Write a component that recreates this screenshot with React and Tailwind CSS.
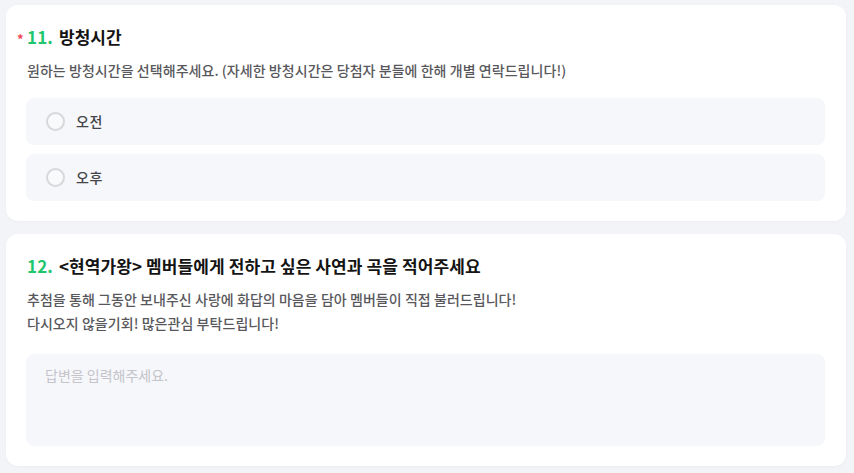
const font = { fontFamily: '"Noto Sans CJK KR", "Noto Sans", sans-serif' };

const options = ['오전', '오후'];

const Question = ({ num, title, required, children }) => (
    <div className="relative">
        {required && (
            <span className="absolute left-[-10px] top-[4px] text-[13px] font-bold text-[#f04452]">*</span>
        )}
        <h2 className="text-[17px] leading-[24px] font-bold text-[#141414] tracking-[0.1px]">
            <span className="text-[#1fc66b] mr-[6px]">{num}.</span>
            {title}
        </h2>
        {children}
    </div>
);

export default function App() {
    return (
        <div style={font} className="min-h-[473px] bg-[#f3f4f8] pt-[5px] pl-[6px] pr-[8px] pb-[7px] flex flex-col gap-[13px]">
            {/* Q11 */}
            <div className="bg-white rounded-[12px] px-[21px] pt-[20px] pb-[20px] shadow-[0_1px_3px_rgba(0,0,0,0.03)]">
                <Question num="11" title="방청시간" required>
                    <p className="mt-[10px] text-[14px] leading-[22px] font-medium text-[#58585c] tracking-[0.05px]">
                        원하는 방청시간을 선택해주세요. (자세한 방청시간은 당첨자 분들에 한해 개별 연락드립니다!)
                    </p>
                </Question>
                <div className="mt-[17px] ml-[-1px] flex flex-col gap-[9px]">
                    {options.map(opt => (
                        <label key={opt} className="h-[47px] rounded-[8px] bg-[#f6f7fb] flex items-center px-[20px] gap-[11px] cursor-pointer">
                            <span className="w-[19px] h-[19px] rounded-full border-2 border-[#d8d8dc] bg-white/40" />
                            <span className="text-[14px] font-medium text-[#444448] tracking-[0.5px]">{opt}</span>
                        </label>
                    ))}
                </div>
            </div>

            {/* Q12 */}
            <div className="bg-white rounded-[12px] px-[21px] pt-[20px] pb-[20px] shadow-[0_1px_3px_rgba(0,0,0,0.03)]">
                <Question num="12" title="<현역가왕> 멤버들에게 전하고 싶은 사연과 곡을 적어주세요">
                    <p className="mt-[9px] text-[14px] leading-[24px] font-medium text-[#58585c] tracking-[0.05px]">
                        추첨을 통해 그동안 보내주신 사랑에 화답의 마음을 담아 멤버들이 직접 불러드립니다!
                        <br />
                        다시오지 않을기회! 많은관심 부탁드립니다!
                    </p>
                </Question>
                <textarea
                    placeholder="답변을 입력해주세요."
                    style={font}
                    className="mt-[19px] ml-[-1px] block w-[calc(100%+1px)] h-[92px] resize-none rounded-[8px] bg-[#f6f7fb] px-[19px] py-[10px] text-[14px] leading-[22px] text-[#333] placeholder:text-[#c4c4ca] outline-none"
                />
            </div>
        </div>
    );
}
